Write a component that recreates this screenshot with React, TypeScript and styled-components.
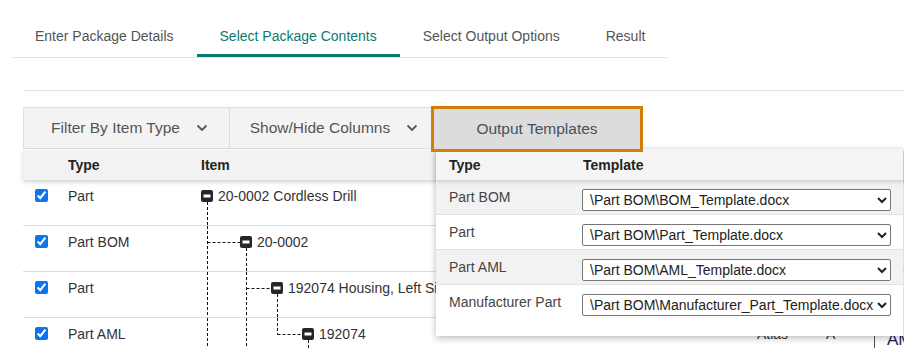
import styled, { createGlobalStyle } from "styled-components";

const GlobalStyle = createGlobalStyle`
  html, body {
    margin: 0;
    padding: 0;
    background: #fff;
    overflow: hidden;
  }
  body {
    font-family: "Liberation Sans", Arial, sans-serif;
    font-size: 14px;
    color: #333;
  }
  * { box-sizing: border-box; }
`;

const Page = styled.div`
  width: 904px;
  height: 348px;
  overflow: hidden;
`;

const Tabs = styled.ul`
  display: flex;
  list-style: none;
  margin: 0 0 0 12px;
  padding: 0;
  width: 655px;
  border-bottom: 1px solid #e3e3e3;
`;

const Tab = styled.li<{ $active?: boolean }>`
  padding: 28px 23px 10px;
  line-height: 16px;
  font-size: 14px;
  color: ${p => (p.$active ? "#0b7b71" : "#555")};
  border-bottom: 3px solid ${p => (p.$active ? "#0b7b71" : "transparent")};
  white-space: nowrap;
`;

const Content = styled.div`
  margin-top: 32px;
  padding-left: 23px;
`;

const Divider = styled.div`
  height: 1px;
  background: #e3e3e3;
`;

const Panel = styled.div`
  position: relative;
  margin-top: 16px;
`;

const Toolbar = styled.div`
  display: inline-flex;
  align-items: flex-start;
  height: 42px;
  background: #f3f3f3;
  border: 1px solid #dedede;
  border-right: none;
`;

const ToolButton = styled.div<{ $width: number }>`
  display: flex;
  align-items: center;
  justify-content: center;
  gap: 16px;
  width: ${p => p.$width}px;
  height: 40px;
  padding-left: 6px;
  border-right: 1px solid #dedede;
  font-size: 15.5px;
  color: #555;
  white-space: nowrap;
`;

const OutputButton = styled.div`
  display: flex;
  align-items: center;
  justify-content: center;
  width: 212px;
  height: 46px;
  margin-top: -2px;
  margin-left: -2px;
  background: #dcdcdc;
  border: 3px solid #d27f0a;
  font-size: 15.5px;
  color: #485060;
  position: relative;
  z-index: 3;
`;

const Table = styled.div`
  width: 1000px;
`;

const GridRow = styled.div`
  display: grid;
  grid-template-columns: 45px 133px 556px 69px 48px 1fr;
`;

const HeadRow = styled(GridRow)`
  height: 30px;
  background: #f2f2f2;
  box-shadow: 0 2px 4px rgba(0, 0, 0, 0.18);
  position: relative;
  z-index: 1;
  margin-top: 1px;
  align-items: center;
  font-weight: bold;
  color: #222;
`;

const BodyRow = styled(GridRow)`
  height: 46px;
  border-bottom: 1px solid #dedede;
`;

const CheckCell = styled.div`
  padding: 9px 0 0 12px;
  input {
    margin: 0;
    width: 13px;
    height: 13px;
    accent-color: #0b75f0;
  }
`;

const TextCell = styled.div`
  padding-top: 8px;
  line-height: 16px;
  white-space: nowrap;
  overflow: hidden;
`;

const ItemCell = styled.div`
  display: flex;
  white-space: nowrap;
  overflow: hidden;
  span {
    padding: 8px 0 0 4px;
    line-height: 16px;
  }
`;

const MarkCell = styled.div`
  margin-top: 12px;
  border-left: 1px solid #555;
  padding-left: 12px;
  font-size: 17px;
  color: #1a2450;
`;

const Popup = styled.div`
  position: absolute;
  top: 42px;
  left: 413px;
  width: 467px;
  background: #fff;
  box-shadow: 0 2px 7px rgba(0, 0, 0, 0.28);
  padding-bottom: 16px;
  z-index: 2;
`;

const PopGrid = styled.div`
  display: grid;
  grid-template-columns: 146px 1fr;
  padding-right: 12px;
`;

const PopHead = styled(PopGrid)`
  height: 31px;
  align-items: center;
  background: #f5f5f5;
  box-shadow: 0 2px 4px rgba(0, 0, 0, 0.15);
  position: relative;
  font-weight: bold;
  color: #222;
  div:first-child { padding-left: 13px; }
  div:last-child { padding-left: 1px; }
`;

const PopRow = styled(PopGrid)<{ $shade?: boolean }>`
  height: 35px;
  background: ${p => (p.$shade ? "#f2f2f2" : "#fff")};
  border-bottom: 1px solid #e2e2e2;
  &:last-child { border-bottom: none; }
`;

const PopType = styled.div`
  padding: 9px 0 0 13px;
  line-height: 16px;
  color: #444;
`;

const TemplateSelect = styled.select`
  margin-top: 9px;
  width: 309px;
  height: 22px;
  font-family: "Liberation Sans", Arial, sans-serif;
  font-size: 14px;
  color: #222;
  background: #fff;
  border: 1px solid #767676;
  border-radius: 2px;
  padding: 0 0 0 3px;
`;

function Chevron() {
  return (
    <svg width="12" height="8" viewBox="0 0 12 8">
      <path d="M1.5 1.5 L6 6 L10.5 1.5" fill="none" stroke="#555" strokeWidth="1.8" />
    </svg>
  );
}

const iconLeft = (l: number) => (l === 0 ? 0 : 8 + 31 * l);
const stem = (l: number) => iconLeft(l) + 6.5;

function TreeGuide({ level, last }: { level: number; last?: boolean }) {
  const w = iconLeft(level) + 13;
  const x = iconLeft(level);
  const dash = { stroke: "#111", strokeWidth: 1, strokeDasharray: "3 2", fill: "none" };
  const lines = [];
  for (let k = 0; k < level - 1; k++) {
    lines.push(<line key={"v" + k} x1={stem(k)} y1={0} x2={stem(k)} y2={46} {...dash} />);
  }
  if (level > 0) {
    const p = stem(level - 1);
    lines.push(<line key="pv" x1={p} y1={0} x2={p} y2={last ? 16.5 : 46} {...dash} />);
    lines.push(<line key="ph" x1={p} y1={16.5} x2={x} y2={16.5} {...dash} />);
  }
  return (
    <svg width={w} height={46} style={{ flexShrink: 0 }}>
      {lines}
      <line x1={stem(level)} y1={22} x2={stem(level)} y2={46} {...dash} />
      <rect x={x} y={10} width={12} height={12} rx={2} fill="#23262b" />
      <rect x={x + 2.5} y={14.5} width={7} height={3} fill="#fff" />
    </svg>
  );
}

const rows = [
  { type: "Part", level: 0, label: "20-0002 Cordless Drill" },
  { type: "Part BOM", level: 1, label: "20-0002" },
  { type: "Part", level: 2, label: "192074 Housing, Left Side" },
  { type: "Part AML", level: 3, label: "192074", last: true, area: "Atlas", rev: "A", mark: "AM" },
];

const templates = [
  { type: "Part BOM", file: "\\Part BOM\\BOM_Template.docx" },
  { type: "Part", file: "\\Part BOM\\Part_Template.docx" },
  { type: "Part AML", file: "\\Part BOM\\AML_Template.docx" },
  { type: "Manufacturer Part", file: "\\Part BOM\\Manufacturer_Part_Template.docx" },
];

export default function App() {
  return (
    <Page>
      <GlobalStyle />
      <Tabs>
        <Tab>Enter Package Details</Tab>
        <Tab $active>Select Package Contents</Tab>
        <Tab>Select Output Options</Tab>
        <Tab>Result</Tab>
      </Tabs>
      <Content>
        <Divider />
        <Panel>
          <Toolbar>
            <ToolButton $width={206}>
              Filter By Item Type <Chevron />
            </ToolButton>
            <ToolButton $width={203}>
              Show/Hide Columns <Chevron />
            </ToolButton>
            <OutputButton>Output Templates</OutputButton>
          </Toolbar>
          <Table>
            <HeadRow>
              <div />
              <div>Type</div>
              <div>Item</div>
              <div />
              <div />
              <div />
            </HeadRow>
            {rows.map((r, i) => (
              <BodyRow key={i}>
                <CheckCell>
                  <input type="checkbox" checked readOnly />
                </CheckCell>
                <TextCell>{r.type}</TextCell>
                <ItemCell>
                  <TreeGuide level={r.level} last={r.last} />
                  <span>{r.label}</span>
                </ItemCell>
                <TextCell>{r.area}</TextCell>
                <TextCell>{r.rev}</TextCell>
                <div>{r.mark && <MarkCell>{r.mark}</MarkCell>}</div>
              </BodyRow>
            ))}
          </Table>
          <Popup>
            <PopHead>
              <div>Type</div>
              <div>Template</div>
            </PopHead>
            {templates.map((t, i) => (
              <PopRow key={t.type} $shade={i % 2 === 0}>
                <PopType>{t.type}</PopType>
                <div>
                  <TemplateSelect defaultValue={t.file}>
                    <option>{t.file}</option>
                  </TemplateSelect>
                </div>
              </PopRow>
            ))}
          </Popup>
        </Panel>
      </Content>
    </Page>
  );
}
